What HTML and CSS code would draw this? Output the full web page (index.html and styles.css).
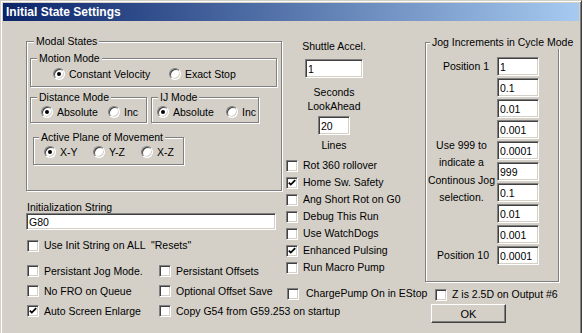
FILE: index.html
```html
<!DOCTYPE html>
<html>
<head>
<meta charset="utf-8">
<title>Initial State Settings</title>
<link rel="stylesheet" href="styles.css">
</head>
<body>
<div class="window">
  <div class="titlebar">Initial State Settings</div>
  <div class="content">
    <div class="col-left">
      <div class="group modal">
        <div class="legend">Modal States</div>
        <div class="group motion">
          <div class="legend lg6">Motion Mode</div>
          <div class="radios r-motion">
            <div class="radio"><span class="rb on"></span>Constant Velocity</div>
            <div class="radio"><span class="rb"></span>Exact Stop</div>
          </div>
        </div>
        <div class="modes">
          <div class="group distance">
            <div class="legend lg6">Distance Mode</div>
            <div class="radios r-distance">
              <div class="radio"><span class="rb on"></span>Absolute</div>
              <div class="radio"><span class="rb"></span>Inc</div>
            </div>
          </div>
          <div class="group ij">
            <div class="legend lg6">IJ Mode</div>
            <div class="radios r-ij">
              <div class="radio"><span class="rb on"></span>Absolute</div>
              <div class="radio"><span class="rb"></span>Inc</div>
            </div>
          </div>
        </div>
        <div class="group plane">
          <div class="legend lg5">Active Plane of Movement</div>
          <div class="radios r-plane">
            <div class="radio"><span class="rb on"></span>X-Y</div>
            <div class="radio"><span class="rb"></span>Y-Z</div>
            <div class="radio"><span class="rb"></span>X-Z</div>
          </div>
        </div>
      </div>
      <div class="init-label">Initialization String</div>
      <div class="field init-field">G80</div>
      <div class="check use-init"><span class="cb"></span>Use Init String on ALL &nbsp;"Resets"</div>
      <div class="opts">
        <div class="check"><span class="cb"></span>Persistant Jog Mode.</div>
        <div class="check"><span class="cb"></span>Persistant Offsets</div>
        <div class="check"><span class="cb"></span>No FRO on Queue</div>
        <div class="check"><span class="cb"></span>Optional Offset Save</div>
        <div class="check"><span class="cb"><svg width="8" height="8" viewBox="0 0 8 8"><polyline points="0.8,3.6 2.8,5.6 7.2,1.2" fill="none" stroke="#000" stroke-width="1.8"/></svg></span>Auto Screen Enlarge</div>
        <div class="check"><span class="cb"></span>Copy G54 from G59.253 on startup</div>
      </div>
    </div>

    <div class="col-mid">
      <div class="shuttle">
        <div class="lbl">Shuttle Accel.</div>
        <div class="field shuttle-field">1</div>
        <div class="lbl2 secs">Seconds<br>LookAhead</div>
        <div class="field look-field">20</div>
        <div class="lbl2 lines">Lines</div>
      </div>
      <div class="checklist">
        <div class="check"><span class="cb"></span>Rot 360 rollover</div>
        <div class="check"><span class="cb"><svg width="8" height="8" viewBox="0 0 8 8"><polyline points="0.8,3.6 2.8,5.6 7.2,1.2" fill="none" stroke="#000" stroke-width="1.8"/></svg></span>Home Sw. Safety</div>
        <div class="check"><span class="cb"></span>Ang Short Rot on G0</div>
        <div class="check"><span class="cb"></span>Debug This Run</div>
        <div class="check"><span class="cb"></span>Use WatchDogs</div>
        <div class="check"><span class="cb"><svg width="8" height="8" viewBox="0 0 8 8"><polyline points="0.8,3.6 2.8,5.6 7.2,1.2" fill="none" stroke="#000" stroke-width="1.8"/></svg></span>Enhanced Pulsing</div>
        <div class="check"><span class="cb"></span>Run Macro Pump</div>
      </div>
      <div class="check charge"><span class="cb"></span>ChargePump On in EStop</div>
    </div>

    <div class="col-right">
      <div class="group jog">
        <div class="legend">Jog Increments in Cycle Mode</div>
        <div class="jog-grid">
          <div class="pos pos-first">Position 1</div>
          <div class="note">Use 999 to<br>indicate a<br>Continous Jog<br>selection.</div>
          <div class="pos pos-last">Position 10</div>
          <div class="field jf">1</div>
          <div class="field jf">0.1</div>
          <div class="field jf">0.01</div>
          <div class="field jf">0.001</div>
          <div class="field jf">0.0001</div>
          <div class="field jf">999</div>
          <div class="field jf">0.1</div>
          <div class="field jf">0.01</div>
          <div class="field jf">0.001</div>
          <div class="field jf">0.0001</div>
        </div>
      </div>
      <div class="check zcheck"><span class="cb"></span>Z is 2.5D on Output #6</div>
      <div class="btn">OK</div>
    </div>
  </div>
</div>
</body>
</html>
```

FILE: styles.css
```css
* { box-sizing: border-box; }
html, body { margin: 0; padding: 0; background: #ffffff; }
body {
  font-family: "Liberation Sans", Arial, sans-serif;
  font-size: 10.5px;
  color: #000;
}
.window {
  width: 582px;
  height: 333px;
  background: #d4d0c8;
  border-top: 1px solid #d4d0c8;
  border-left: 1px solid #d4d0c8;
  border-right: 1px solid #404040;
  box-shadow: inset 1px 1px 0 #ffffff, inset -1px 0 0 #808080;
  padding: 2px 2px 0 2px;
  overflow: hidden;
}
.titlebar {
  height: 18px;
  line-height: 19px;
  padding-left: 3px;
  color: #fff;
  font-weight: bold;
  font-size: 12px;
  background: linear-gradient(to right, #0a246a, #a6caf0);
  white-space: nowrap;
}
.content {
  display: flex;
  align-items: flex-start;
}
.col-left { margin-left: 23px; width: 256px; flex: none; }
.col-mid { margin-left: 3px; width: 140px; flex: none; }
.col-right { width: 134px; flex: none; }

/* group boxes */
.group {
  border: 1px solid #808080;
  box-shadow: inset 1px 1px 0 #ffffff, 1px 1px 0 #ffffff;
}
.legend {
  display: table;
  margin: -7px 0 0 4px;
  padding: 0 2px;
  line-height: 13px;
  background: #d4d0c8;
  white-space: nowrap;
}
.legend.lg6 { margin-left: 6px; }
.legend.lg5 { margin-left: 5px; }

.modal { margin-top: 20px; height: 150px; padding-left: 3px; }
.motion { margin-top: 10px; width: 247px; height: 29px; }
.modes { display: flex; gap: 4px; margin-top: 10px; }
.distance { width: 117px; height: 26px; }
.ij { width: 108px; height: 26px; }
.plane { margin: 14px 0 0 3px; width: 151px; height: 28px; }

.radios { display: grid; align-items: center; margin-top: 2px; }
.r-motion { margin-top: 3px; padding-left: 22px; grid-template-columns: 116px auto; }
.r-distance { padding-left: 10px; grid-template-columns: 67px auto; }
.r-ij { padding-left: 5px; grid-template-columns: 69px auto; }
.r-plane { padding-left: 10px; grid-template-columns: 49px 48px auto; }

.radio {
  display: flex;
  align-items: center;
  gap: 4px;
  height: 12px;
  line-height: 12px;
  white-space: nowrap;
}
.rb {
  position: relative;
  flex: none;
  width: 12px;
  height: 12px;
  border-radius: 50%;
  background: #fff;
  border: 1px solid;
  border-color: #808080 #ffffff #ffffff #808080;
  box-shadow: inset 1px 1px 0 #404040, inset -1px -1px 0 #d4d0c8;
}
.rb.on::after {
  content: "";
  position: absolute;
  left: 3px;
  top: 3px;
  width: 4px;
  height: 4px;
  border-radius: 50%;
  background: #000;
}

/* checkboxes */
.check {
  display: flex;
  align-items: center;
  gap: 5px;
  height: 13px;
  line-height: 13px;
  white-space: nowrap;
}
.cb {
  flex: none;
  width: 12px;
  height: 12px;
  background: #fff;
  border: 1px solid;
  border-color: #808080 #ffffff #ffffff #808080;
  box-shadow: inset 1px 1px 0 #404040, inset -1px -1px 0 #d4d0c8;
  display: flex;
  align-items: center;
  justify-content: center;
}
.cb svg { display: block; }

/* text fields */
.field {
  background: #fff;
  border: 1px solid;
  border-color: #808080 #ffffff #ffffff #808080;
  box-shadow: inset 1px 1px 0 #404040, inset -1px -1px 0 #d4d0c8;
  padding-left: 2px;
  display: flex;
  align-items: center;
  white-space: nowrap;
}

.init-label { margin: 10px 0 0 1px; line-height: 12px; }
.init-field { width: 250px; height: 17px; }
.use-init { margin: 9px 0 0 1px; }
.opts {
  display: grid;
  grid-template-columns: 132px 124px;
  grid-auto-rows: 20px;
  align-items: center;
  margin-top: 9px;
}
.opts .check { margin-left: 1px; }

/* middle column */
.shuttle {
  margin: 19px 0 0 16px;
  width: 66px;
  display: flex;
  flex-direction: column;
  align-items: center;
  text-align: center;
}
.lbl { line-height: 13px; white-space: nowrap; }
.lbl2 { line-height: 14px; white-space: nowrap; }
.shuttle-field { margin-top: 6px; width: 58px; height: 19px; align-self: center; }
.secs { margin-top: 7px; }
.look-field { margin-top: 3px; width: 32px; height: 19px; }
.lines { margin-top: 3px; }
.checklist { margin: 5px 0 0 1px; }
.checklist .check { height: 17px; }
.charge { margin: 11px 0 0 2px; gap: 7px; }

/* right column */
.jog { margin-top: 21px; width: 134px; height: 240px; }
.jog-grid {
  display: grid;
  grid-template-columns: 71px 42px;
  grid-template-rows: repeat(10, 19px);
  row-gap: 2px;
  margin-top: 8px;
}
.jf { grid-column: 2; height: 19px; }
.pos {
  grid-column: 1;
  text-align: right;
  padding-right: 8px;
  align-self: center;
  line-height: 13px;
  white-space: nowrap;
}
.pos-first { grid-row: 1; }
.pos-last { grid-row: 10; }
.note {
  grid-column: 1;
  grid-row: 4 / 9;
  align-self: center;
  text-align: center;
  line-height: 17.5px;
  white-space: nowrap;
}
.zcheck { margin: 6px 0 0 10px; }
.btn {
  margin: 3px 0 0 6px;
  width: 75px;
  height: 19px;
  border: 1px solid;
  border-color: #ffffff #404040 #404040 #ffffff;
  box-shadow: inset -1px -1px 0 #808080;
  display: flex;
  align-items: center;
  justify-content: center;
  font-size: 11px;
}
```
